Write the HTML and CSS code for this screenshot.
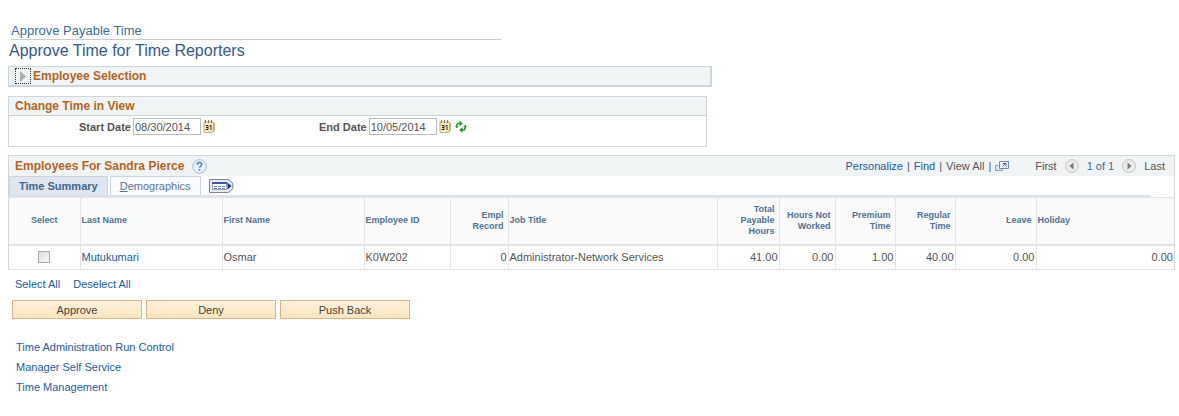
FILE: index.html
```html
<!DOCTYPE html>
<html lang="en">
<head>
    <meta charset="UTF-8">
    <meta name="viewport" content="width=device-width, initial-scale=1.0">
    <title>Approve Payable Time</title>
    <link rel="stylesheet" href="styles.css">
</head>
<body>
    <!-- Shared icons -->
    <svg class="sprite" aria-hidden="true">
        <symbol id="calendar" viewBox="0 0 12 13">
            <path d="M1 2h9.500v8l-2 2.500H1z" fill="#fbeec4" stroke="#c4ae7c"/>
            <path d="M11.500 3v7.500l-2 2H3" fill="none" stroke="#c9b37c"/>
            <path d="M2.500 0v3M5.500 0v3M8.500 0v3" stroke="#84734f"/>
            <path d="M2.500 5.500h2.500v4H2.500M3 7.500h2M6.500 6l1.500-.7V10" fill="none" stroke="#33281c"/>
        </symbol>
    </svg>

    <div class="page">
        <div class="page-title">Approve Payable Time</div>
        <h1>Approve Time for Time Reporters</h1>

        <section class="group group-collapsed">
            <h2>
                <button type="button" class="expand" aria-label="Expand Employee Selection">
                    <svg width="8" height="11" viewBox="0 0 8 11"><path d="M1 0l6 5.500L1 11z" fill="#adadad"/></svg>
                </button>
                Employee Selection
            </h2>
        </section>

        <section class="group group-dates">
            <h2>Change Time in View</h2>
            <div class="dates">
                <div class="field">
                    <label for="start">Start Date</label>
                    <input type="text" id="start" value="08/30/2014">
                    <button type="button" class="icon" aria-label="Choose start date"><svg width="12" height="13"><use href="#calendar"/></svg></button>
                </div>
                <div class="field">
                    <label for="end">End Date</label>
                    <input type="text" id="end" value="10/05/2014">
                    <button type="button" class="icon" aria-label="Choose end date"><svg width="12" height="13"><use href="#calendar"/></svg></button>
                    <button type="button" class="icon refresh" aria-label="Refresh">
                        <svg width="12" height="13" viewBox="0 0 12 13">
                            <path d="M1.800 7V5.500q0-2 2-2H5M10.200 6v1.500q0 2.500-2 2.500H7" fill="none" stroke="#279c3b" stroke-width="1.700"/>
                            <path d="M4.500.5l3.300 3-3.300 3zM7.500 7l-3.300 3 3.300 3zM0 6h3.600L1.800 8.500zM8.400 7H12l-1.800-2.500z" fill="#279c3b"/>
                        </svg>
                    </button>
                </div>
            </div>
        </section>

        <section class="grid">
            <div class="grid-bar">
                <h2>Employees For Sandra Pierce</h2>
                <button type="button" class="icon" aria-label="Help">
                    <svg width="15" height="15" viewBox="0 0 15 15">
                        <circle cx="7.500" cy="7.500" r="6.800" fill="#e9f2fb" stroke="#a9bfd8"/>
                        <path d="M5.300 5.800q0-2.200 2.200-2.200t2.200 2q0 1-1.200 1.700-1 .6-1 1.500" fill="none" stroke="#4a82bf" stroke-width="1.500"/>
                        <path d="M6.700 10h1.600v1.700H6.700z" fill="#4a82bf"/>
                    </svg>
                </button>
                <div class="tools">
                    <a href="#">Personalize</a><span>|</span><a href="#">Find</a><span>|</span><span>View All</span><span>|</span>
                    <button type="button" class="icon" aria-label="Zoom grid">
                        <svg width="14" height="13" viewBox="0 0 14 13">
                            <path d="M3.500 5.500h-3v5h7v-2" fill="#dbe6f1" stroke="#8ba3bf"/>
                            <path d="M4.500 1.500h9v7h-9z" fill="#f4f8fc" stroke="#6f8db1"/>
                            <path d="M7.500 6.500l3-3M8 3.500h3v3" fill="none" stroke="#35608f"/>
                        </svg>
                    </button>
                </div>
                <div class="pager">
                    <span>First</span>
                    <button type="button" class="icon" aria-label="Previous">
                        <svg width="14" height="14" viewBox="0 0 14 14">
                            <circle cx="7" cy="7" r="6.400" fill="#ececec" stroke="#c6c6c6"/>
                            <path d="M8.500 3.500v7L4.500 7z" fill="#777"/>
                        </svg>
                    </button>
                    <span class="count">1 of 1</span>
                    <button type="button" class="icon" aria-label="Next">
                        <svg width="14" height="14" viewBox="0 0 14 14">
                            <circle cx="7" cy="7" r="6.400" fill="#ececec" stroke="#c6c6c6"/>
                            <path d="M5.500 3.500v7l4-3.500z" fill="#777"/>
                        </svg>
                    </button>
                    <span>Last</span>
                </div>
            </div>

            <div class="tabs">
                <button type="button" class="tab active">Time Summary</button>
                <button type="button" class="tab"><u>D</u>emographics</button>
                <button type="button" class="icon show-all" aria-label="Show all columns">
                    <svg width="25" height="14" viewBox="0 0 25 14">
                        <path d="M.5.500h18.500q5 2 5 6.500t-5 6.500H.5z" fill="#e6ebf6" stroke="#7782a4"/>
                        <path d="M3.500 3.500h14v7h-14z" fill="#fff" stroke="#9aa7cd"/>
                        <path d="M3 4h15" stroke="#4258a0" stroke-width="2"/>
                        <path d="M5 7.500h12M5 9.500h12" stroke="#6b79ae" stroke-dasharray="3 1"/>
                        <path d="M18.500 3.500v7L22.500 7z" fill="#1f347a"/>
                    </svg>
                </button>
            </div>

            <table>
                <colgroup>
                    <col class="c-select"><col class="c-name"><col class="c-name"><col class="c-id"><col class="c-record"><col>
                    <col class="c-total"><col class="c-worked"><col class="c-hours"><col class="c-hours"><col class="c-leave"><col class="c-holiday">
                </colgroup>
                <thead>
                    <tr>
                        <th class="center">Select</th>
                        <th>Last Name</th>
                        <th>First Name</th>
                        <th>Employee ID</th>
                        <th class="num">Empl Record</th>
                        <th>Job Title</th>
                        <th class="num">Total Payable Hours</th>
                        <th class="num">Hours Not Worked</th>
                        <th class="num">Premium Time</th>
                        <th class="num">Regular Time</th>
                        <th class="num">Leave</th>
                        <th>Holiday</th>
                    </tr>
                </thead>
                <tbody>
                    <tr>
                        <td class="center"><input type="checkbox" aria-label="Select Mutukumari"></td>
                        <td><a href="#">Mutukumari</a></td>
                        <td>Osmar</td>
                        <td>K0W202</td>
                        <td class="num">0</td>
                        <td>Administrator-Network Services</td>
                        <td class="num">41.00</td>
                        <td class="num">0.00</td>
                        <td class="num">1.00</td>
                        <td class="num">40.00</td>
                        <td class="num">0.00</td>
                        <td class="num">0.00</td>
                    </tr>
                </tbody>
            </table>
        </section>

        <div class="select-links">
            <a href="#">Select All</a>
            <a href="#">Deselect All</a>
        </div>

        <div class="actions">
            <button type="button">Approve</button>
            <button type="button">Deny</button>
            <button type="button">Push Back</button>
        </div>

        <nav class="links">
            <a href="#">Time Administration Run Control</a>
            <a href="#">Manager Self Service</a>
            <a href="#">Time Management</a>
        </nav>
    </div>
</body>
</html>
```

FILE: styles.css
```css
* {
    box-sizing: border-box;
}
body {
    margin: 0;
    background-color: #fff;
    color: #555;
    font-family: "Liberation Sans", Arial, sans-serif;
    font-size: 11px;
    line-height: 16px;
}
.sprite {
    display: none;
}
.page {
    padding: 22px 4px 20px 8px;
}
a {
    color: #1c5c9f;
    text-decoration: none;
}
a:hover {
    text-decoration: underline;
}
button, input {
    font: inherit;
    color: inherit;
}
svg {
    display: block;
}
.icon {
    padding: 0;
    border: none;
    background: none;
    cursor: pointer;
}
.page-title {
    max-width: 491px;
    margin-left: 3px;
    border-bottom: 1px solid #ccc;
    color: #426a99;
    font-size: 13px;
    line-height: 17px;
}
h1 {
    margin: 0 0 5px 1px;
    color: #34598c;
    font-size: 16px;
    font-weight: normal;
    line-height: 21px;
}
h2 {
    margin: 0;
    color: #b5651d;
    font-size: 12px;
    line-height: 18px;
}

/* Group boxes */
.group {
    border: 1px solid #cfd5de;
}
.group h2 {
    display: flex;
    align-items: center;
    padding-left: 6px;
    background-color: #f0f4f5;
}
.group-collapsed {
    max-width: 704px;
    margin-bottom: 9px;
    border-right-width: 2px;
    border-bottom-width: 2px;
}
.group-dates {
    max-width: 699px;
    margin-bottom: 8px;
}
.group-dates h2 {
    border-bottom: 1px solid #cfd5de;
}
.group .expand {
    display: flex;
    align-items: center;
    justify-content: center;
    width: 16px;
    height: 16px;
    margin-right: 2px;
    padding: 0;
    border: 1px dotted #333;
    background: none;
}
.dates {
    display: grid;
    grid-template-columns: 240px 1fr;
    padding: 2px 0 11px 70px;
}
.field {
    display: flex;
    align-items: center;
    gap: 2px;
}
.field label {
    font-weight: bold;
    white-space: nowrap;
}
.field input {
    width: 68px;
    height: 17px;
    padding: 0 1px;
    border: 1px solid #bbb;
}
.refresh {
    margin-left: 2px;
}

/* Employee grid */
.grid {
    border: 1px solid #d2d6de;
    border-bottom: none;
}
.grid-bar {
    display: flex;
    align-items: center;
    height: 20px;
    padding: 0 9px 0 6px;
    background-color: #f0f4f5;
}
.grid-bar h2 {
    margin-right: 8px;
}
.tools, .pager {
    display: flex;
    align-items: center;
    gap: 4px;
}
.tools {
    margin-left: auto;
}
.pager {
    gap: 8px;
    margin-left: 26px;
}
.pager .count {
    color: #426a99;
}
.tabs {
    display: flex;
    align-items: flex-end;
    height: 21px;
    margin-right: 23px;
    border-bottom: 2px solid #d9e2ef;
}
.tab {
    height: 19px;
    padding: 0 9px;
    border: 1px solid #ccd3de;
    border-bottom: none;
    background-color: #fafbfc;
    color: #5b7492;
    line-height: 18px;
}
.tab.active {
    margin-right: 2px;
    background-color: #dfe6f1;
    color: #3f658e;
    font-weight: bold;
}
.show-all {
    margin: 0 0 2px 8px;
}
table {
    width: 100%;
    table-layout: fixed;
    border-collapse: collapse;
}
.c-select {
    width: 71px;
}
.c-name {
    width: 142px;
}
.c-id {
    width: 86px;
}
.c-record {
    width: 58px;
}
.c-total {
    width: 62px;
}
.c-worked {
    width: 56px;
}
.c-hours {
    width: 60px;
}
.c-leave {
    width: 81px;
}
.c-holiday {
    width: 138px;
}
th, td {
    padding: 0 1px;
    border: 1px solid #e4e4e4;
    text-align: left;
}
th:first-child, td:first-child {
    border-left: none;
}
th:last-child, td:last-child {
    border-right: none;
}
th {
    height: 47px;
    background-color: #fafafa;
    border-bottom-width: 2px;
    color: #4f7194;
    font-size: 9px;
    line-height: 11px;
}
td {
    height: 25px;
}
th.num {
    padding-right: 4px;
    padding-left: 6px;
}
.num {
    text-align: right;
}
.center {
    text-align: center;
}
td input {
    appearance: none;
    display: block;
    width: 12px;
    height: 12px;
    margin: 0 auto;
    border: 1px solid #aaa;
    background: linear-gradient(135deg, #ddd, #f8f8f8);
}
td input:checked {
    background: #426a99;
}

/* Links and buttons under the grid */
.select-links {
    display: flex;
    gap: 13px;
    padding: 6px 7px 8px;
}
.actions {
    display: flex;
    gap: 4px;
    padding-left: 4px;
}
.actions button {
    width: 130px;
    height: 19px;
    padding: 0;
    border: 1px solid #dfb288;
    background: linear-gradient(#fdf1dc, #fbe5c0);
    color: #444;
    cursor: pointer;
}
.links {
    display: flex;
    flex-direction: column;
    align-items: flex-start;
    gap: 4px;
    padding: 20px 8px 0;
}
```
